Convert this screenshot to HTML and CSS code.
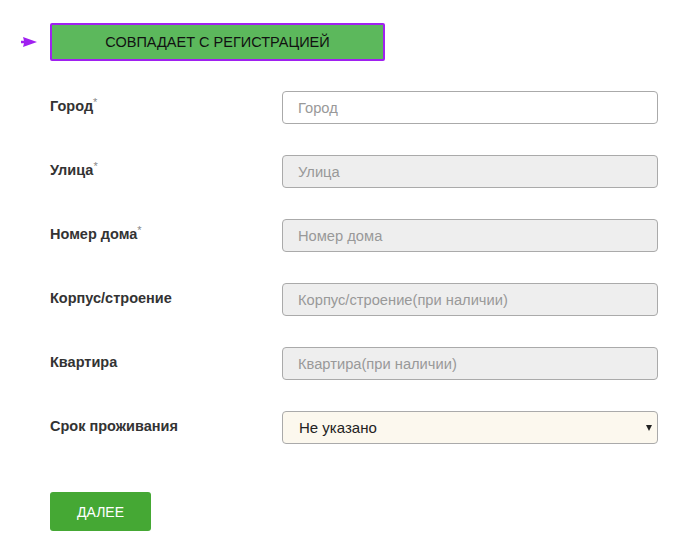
FILE: index.html
```html
<!DOCTYPE html>
<html lang="ru">
<head>
  <meta charset="UTF-8">
  <meta name="viewport" content="width=device-width, initial-scale=1.0">
  <title>Адрес проживания</title>
  <link rel="stylesheet" href="styles.css">
</head>
<body>
  <div class="page">
    <div class="same-row">
      <svg class="pointer" width="16" height="10" viewBox="0 0 16 10">
        <path d="M0 3.8 L3 3.8 L2 0 L16 5 L2 10 L3 6.2 L0 6.2 Z" fill="#a020f0"/>
      </svg>
      <button class="btn-same">СОВПАДАЕТ С РЕГИСТРАЦИЕЙ</button>
    </div>

    <form class="address">
      <div class="field">
        <label class="field-label">Город<sup>*</sup></label>
        <input class="field-input" type="text" placeholder="Город">
      </div>
      <div class="field">
        <label class="field-label">Улица<sup>*</sup></label>
        <input class="field-input" type="text" placeholder="Улица" disabled>
      </div>
      <div class="field">
        <label class="field-label">Номер дома<sup>*</sup></label>
        <input class="field-input" type="text" placeholder="Номер дома" disabled>
      </div>
      <div class="field">
        <label class="field-label">Корпус/строение</label>
        <input class="field-input" type="text" placeholder="Корпус/строение(при наличии)" disabled>
      </div>
      <div class="field">
        <label class="field-label">Квартира</label>
        <input class="field-input" type="text" placeholder="Квартира(при наличии)" disabled>
      </div>
      <div class="field">
        <label class="field-label">Срок проживания</label>
        <div class="select-wrap">
          <select class="field-select">
            <option>Не указано</option>
            <option>Меньше года</option>
            <option>1-3 года</option>
            <option>Больше 3 лет</option>
          </select>
        </div>
      </div>

      <button type="button" class="btn-next">ДАЛЕЕ</button>
    </form>
  </div>
</body>
</html>
```

FILE: styles.css
```css
body{
  margin: 0;
  font-family: "Liberation Sans", Arial, sans-serif;
  color: #333;
  background: #fff;
}
.page{
  padding: 23px 0 0 21px;
}

.same-row{
  display: flex;
  align-items: center;
  gap: 13px;
}
.pointer{
  display: block;
  flex: none;
}
.btn-same{
  width: 335px;
  height: 38px;
  border: 2px solid #a020f0;
  border-radius: 2px;
  background: #5cb85c;
  color: #111;
  font-family: inherit;
  font-size: 14.5px;
  padding: 0;
  cursor: pointer;
}

.address{
  margin: 30px 0 0 29px;
}
.field{
  display: flex;
  align-items: center;
  height: 33px;
  margin-bottom: 31px;
}
.field-label{
  width: 232px;
  flex: none;
  padding-bottom: 4px;
  font-size: 14.5px;
  font-weight: bold;
  color: #333;
}
.field-label sup{
  font-size: 11px;
  font-weight: normal;
  color: #888;
  vertical-align: 5px;
  line-height: 0;
}
.field-input{
  box-sizing: border-box;
  width: 376px;
  height: 33px;
  padding: 0 15px;
  border: 1px solid #aaa;
  border-radius: 4px;
  background: #fff;
  font-family: inherit;
  font-size: 14.7px;
  color: #333;
  outline: none;
}
.field-input:disabled{
  background: #eee;
}
.field-input::placeholder{
  color: #999;
}

.select-wrap{
  position: relative;
  width: 376px;
}
.select-wrap::after{
  content: '';
  position: absolute;
  top: 14px;
  right: 6px;
  border-left: 3px solid transparent;
  border-right: 3px solid transparent;
  border-top: 6px solid #222;
  pointer-events: none;
}
.field-select{
  box-sizing: border-box;
  width: 100%;
  height: 33px;
  padding: 0 16px;
  border: 1px solid #aaa;
  border-radius: 4px;
  background: #fcf8ee;
  font-family: inherit;
  font-size: 15px;
  color: #222;
  appearance: none;
  -webkit-appearance: none;
  outline: none;
}

.btn-next{
  margin-top: 17px;
  width: 101px;
  height: 39px;
  border: none;
  border-radius: 3px;
  background: #45a834;
  color: #fff;
  font-family: inherit;
  font-size: 14px;
  padding: 0;
  cursor: pointer;
}
```
